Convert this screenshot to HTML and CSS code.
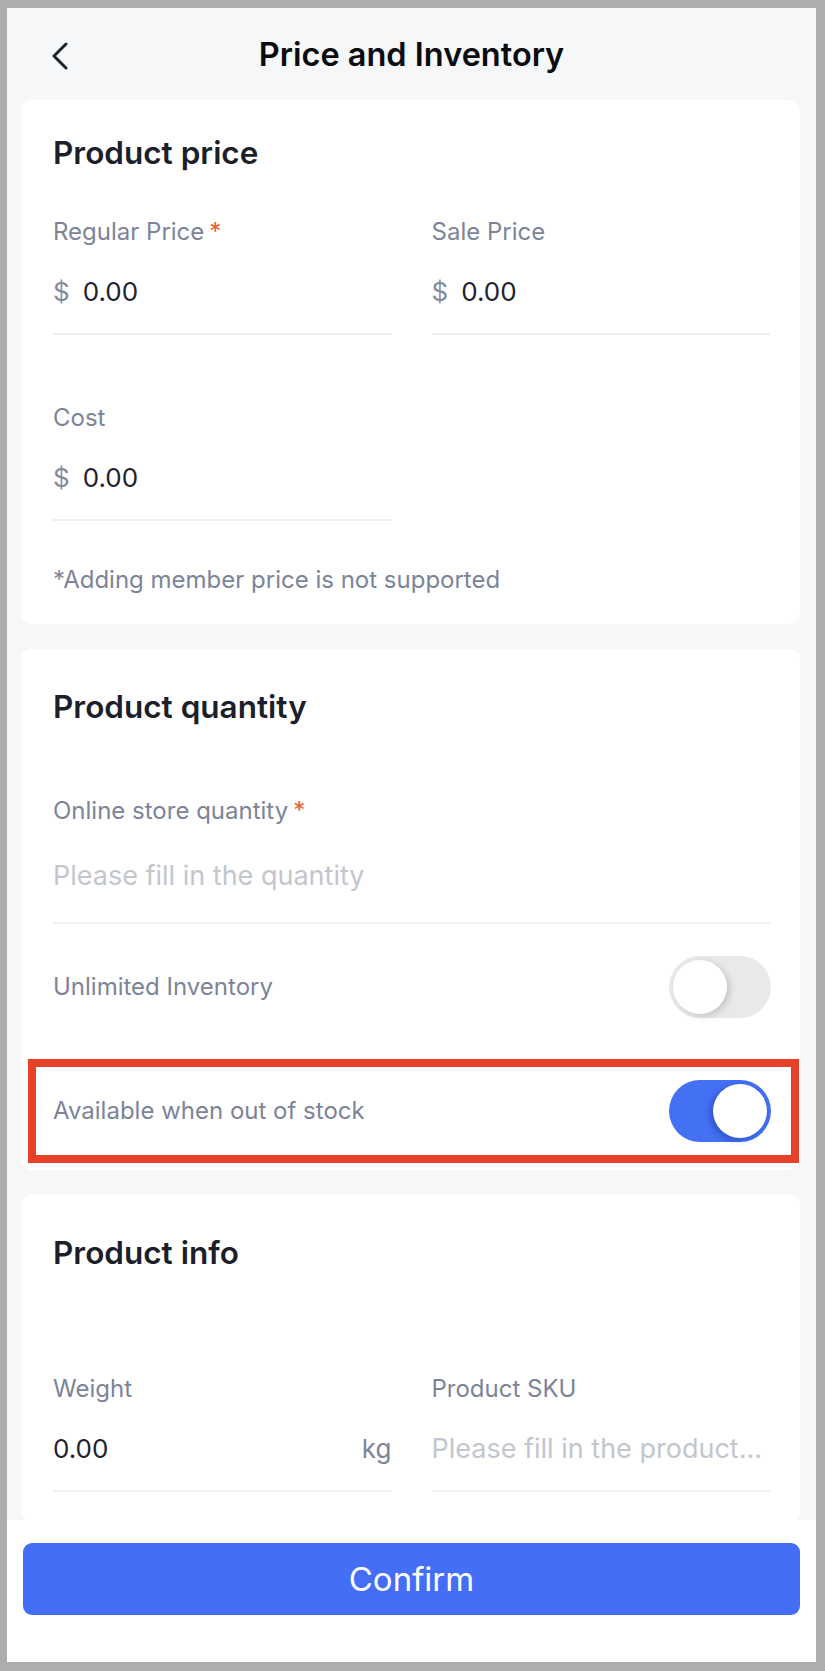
FILE: index.html
```html
<!DOCTYPE html>
<html lang="en">
<head>
<meta charset="utf-8">
<title>Price and Inventory</title>
<link rel="stylesheet" href="styles.css">
</head>
<body>
<div class="screen">
  <header class="topbar">
    <button class="back" aria-label="Back">
      <svg width="18" height="28" viewBox="0 0 18 28" aria-hidden="true">
        <path d="M15 2 L3 14 L15 26" fill="none" stroke="#1f2330" stroke-width="3" stroke-linecap="round" stroke-linejoin="round"/>
      </svg>
    </button>
    <h1 class="title">Price and Inventory</h1>
    <span class="spacer"></span>
  </header>

  <main class="content">
    <section class="card card-price">
      <h2 class="card-heading gap-sm">Product price</h2>
      <div class="grid-2">
        <div class="field">
          <div class="field-label">Regular Price<span class="req">*</span></div>
          <div class="field-value"><span class="currency">$</span><span class="num">0.00</span></div>
        </div>
        <div class="field">
          <div class="field-label">Sale Price</div>
          <div class="field-value"><span class="currency">$</span><span class="num">0.00</span></div>
        </div>
      </div>
      <div class="grid-2 row-next">
        <div class="field">
          <div class="field-label">Cost</div>
          <div class="field-value"><span class="currency">$</span><span class="num">0.00</span></div>
        </div>
      </div>
      <p class="note">*Adding member price is not supported</p>
    </section>

    <section class="card card-qty">
      <h2 class="card-heading gap-md">Product quantity</h2>
      <div class="field field-lg">
        <div class="field-label">Online store quantity<span class="req">*</span></div>
        <div class="field-value placeholder">Please fill in the quantity</div>
      </div>
      <div class="switch-row first">
        <span class="switch-label">Unlimited Inventory</span>
        <span class="switch"><span class="knob"></span></span>
      </div>
      <div class="switch-row second">
        <span class="switch-label">Available when out of stock</span>
        <span class="switch on"><span class="knob"></span></span>
        <span class="highlight" aria-hidden="true"></span>
      </div>
    </section>

    <section class="card">
      <h2 class="card-heading gap-lg">Product info</h2>
      <div class="grid-2">
        <div class="field">
          <div class="field-label">Weight</div>
          <div class="field-value split"><span class="num">0.00</span><span class="unit">kg</span></div>
        </div>
        <div class="field">
          <div class="field-label">Product SKU</div>
          <div class="field-value placeholder">Please fill in the product...</div>
        </div>
      </div>
    </section>
  </main>

  <footer class="footer">
    <button class="confirm">Confirm</button>
  </footer>
</div>
</body>
</html>
```

FILE: styles.css
```css
* { box-sizing: border-box; }

html, body {
  margin: 0;
  padding: 0;
  background: #adadad;
}

body {
  font-family: Inter, "Noto Sans", "Liberation Sans", sans-serif;
}

.screen {
  width: 809px;
  height: 1654px;
  margin: 8px 0 0 7px;
  background: #f6f7f9;
  display: flex;
  flex-direction: column;
  overflow: hidden;
}

/* header */
.topbar {
  height: 92px;
  flex: none;
  display: grid;
  grid-template-columns: 1fr auto 1fr;
  align-items: start;
  padding-top: 27px;
}

.back {
  justify-self: start;
  margin: 7px 0 0 44px;
  padding: 0;
  border: 0;
  background: none;
  width: 18px;
  height: 28px;
  display: block;
}

.back svg { display: block; }

.title {
  margin: 0;
  font-size: 32.5px;
  line-height: 40px;
  font-weight: 600;
  color: #0b0c10;
}

/* content */
.content {
  flex: 1;
  min-height: 0;
  overflow: hidden;
  padding: 0 16px 0 14px;
}

.card {
  background: #fff;
  border-radius: 10px;
  padding: 38px 30px 29px 32px;
  margin-bottom: 25px;
}

.card-price {
  padding-top: 33px;
  padding-bottom: 29px;
}

.card-qty { padding-bottom: 28px; }

.card-heading {
  margin: 0;
  font-size: 31.5px;
  line-height: 40px;
  font-weight: 600;
  color: #1c1f2a;
}

.gap-sm { margin-bottom: 42px; }
.gap-md { margin-bottom: 67px; }
.gap-lg { margin-bottom: 99px; }

.grid-2 {
  display: grid;
  grid-template-columns: 1fr 1fr;
  column-gap: 40px;
}

.row-next { margin-top: 66px; }

.field {
  padding-top: 2px;
  padding-bottom: 24px;
  border-bottom: 2px solid #eeeff3;
  min-width: 0;
}

.field-label {
  font-size: 24px;
  line-height: 30px;
  color: #7c8499;
  margin-bottom: 28px;
}

.req {
  color: #ee5b35;
  margin-left: 5px;
}

.field-value {
  font-size: 26px;
  line-height: 34px;
  color: #1f2230;
  display: flex;
  align-items: baseline;
  white-space: nowrap;
}

.currency {
  color: #858ca0;
  margin-right: 13px;
}

.split { justify-content: space-between; }

.unit { color: #7c8499; }

.placeholder {
  color: #c3c6cf;
  font-size: 27px;
}

.field-lg { padding-bottom: 29px; }
.field-lg .field-label { margin-bottom: 33px; }

.note {
  margin: 44px 0 0;
  font-size: 24px;
  line-height: 30px;
  color: #7c8499;
}

/* switches */
.switch-row {
  position: relative;
  display: flex;
  justify-content: space-between;
  align-items: center;
}

.switch-row.first { margin-top: 32px; }
.switch-row.second { margin-top: 62px; }

.switch-label {
  font-size: 24px;
  line-height: 30px;
  color: #7c8499;
}

.switch {
  width: 102px;
  height: 62px;
  border-radius: 31px;
  background: #e9e9ea;
  padding: 4px;
  display: flex;
  align-items: center;
  justify-content: flex-start;
  flex: none;
  margin-right: -1px;
}

.knob {
  width: 54px;
  height: 54px;
  border-radius: 50%;
  background: #fff;
  box-shadow: 3px 2px 6px rgba(0, 0, 0, 0.16);
}

.switch.on {
  background: #4470f4;
  justify-content: flex-end;
}

.switch.on .knob {
  box-shadow: -3px 2px 6px rgba(10, 30, 120, 0.35);
}

.highlight {
  position: absolute;
  top: -21px;
  bottom: -21px;
  left: -25px;
  right: -29px;
  border: 8px solid #e8412a;
  pointer-events: none;
}

/* footer */
.footer {
  flex: none;
  height: 142px;
  background: #fff;
  padding: 23px 16px 0 16px;
}

.confirm {
  display: block;
  width: 100%;
  height: 72px;
  border: 0;
  border-radius: 9px;
  background: #456ef6;
  color: #fff;
  font-family: Inter, "Noto Sans", "Liberation Sans", sans-serif;
  font-size: 33px;
  line-height: 72px;
  font-weight: 400;
  padding: 0;
}
```
